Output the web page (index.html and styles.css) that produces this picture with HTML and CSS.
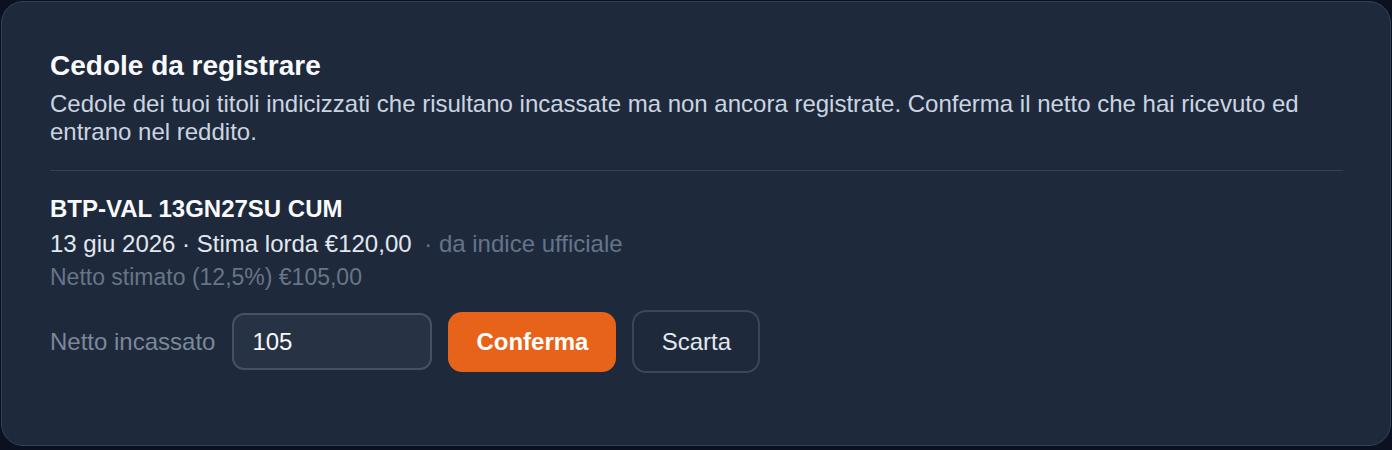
FILE: index.html
```html
<!DOCTYPE html>
<html lang="it">
<head>
    <meta charset="UTF-8">
    <meta name="viewport" content="width=device-width, initial-scale=1.0">
    <title>Cedole da registrare</title>
    <link rel="stylesheet" href="styles.css">
</head>
<body>
    <div class="card">
        <h2 class="title">Cedole da registrare</h2>
        <p class="intro">Cedole dei tuoi titoli indicizzati che risultano incassate ma non ancora registrate. Conferma il netto che hai ricevuto ed entrano nel reddito.</p>
        <div class="coupon">
            <div class="bond">BTP-VAL 13GN27SU CUM</div>
            <div class="meta">13 giu 2026 · Stima lorda €120,00 <span class="source">· da indice ufficiale</span></div>
            <div class="net">Netto stimato (12,5%) €105,00</div>
            <div class="actions">
                <label class="label" for="netto">Netto incassato</label>
                <input id="netto" class="input" type="text" value="105">
                <button class="btn btn-primary">Conferma</button>
                <button class="btn btn-ghost">Scarta</button>
            </div>
        </div>
    </div>
</body>
</html>
```

FILE: styles.css
```css
body {
    font-family: "Liberation Sans", Arial, sans-serif;
    margin: 0;
    padding: 1px;
    background-color: #0b1120;
}
.card {
    width: 1390px;
    height: 445px;
    box-sizing: border-box;
    background: #1e293b;
    border: 1px solid #334155;
    border-radius: 22px;
    padding: 47px 47px 0 48px;
}
.title {
    margin: 0;
    font-size: 28px;
    font-weight: bold;
    color: #f8fafc;
    line-height: 34px;
}
.intro {
    margin: 7px 0 0;
    font-size: 24px;
    line-height: 28px;
    color: #cbd5e1;
    padding-bottom: 24px;
    border-bottom: 1px solid #334155;
}
.coupon {
    padding-top: 24px;
}
.bond {
    font-size: 24px;
    font-weight: bold;
    color: #f8fafc;
    line-height: 28px;
}
.meta {
    margin-top: 7px;
    font-size: 24px;
    line-height: 28px;
    color: #e2e8f0;
}
.source {
    color: #64748b;
    margin-left: 6px;
}
.net {
    margin-top: 5px;
    font-size: 23px;
    line-height: 28px;
    color: #687587;
}
.actions {
    display: flex;
    align-items: center;
    gap: 16px;
    margin-top: 19px;
}
.label {
    font-size: 24px;
    color: #7c8799;
    margin-right: 1px;
}
.input {
    width: 200px;
    height: 57px;
    box-sizing: border-box;
    background: #283245;
    border: 2px solid #465264;
    border-radius: 12px;
    padding: 0 18px;
    font-family: inherit;
    font-size: 24px;
    color: #f8fafc;
}
.btn {
    font-family: inherit;
    font-size: 24px;
    border-radius: 14px;
    cursor: pointer;
}
.btn-primary {
    width: 168px;
    height: 60px;
    background: #e8631a;
    border: none;
    color: #fff;
    font-weight: bold;
}
.btn-ghost {
    width: 128px;
    height: 63px;
    background: transparent;
    border: 2px solid #3b4658;
    color: #e2e8f0;
}
```
